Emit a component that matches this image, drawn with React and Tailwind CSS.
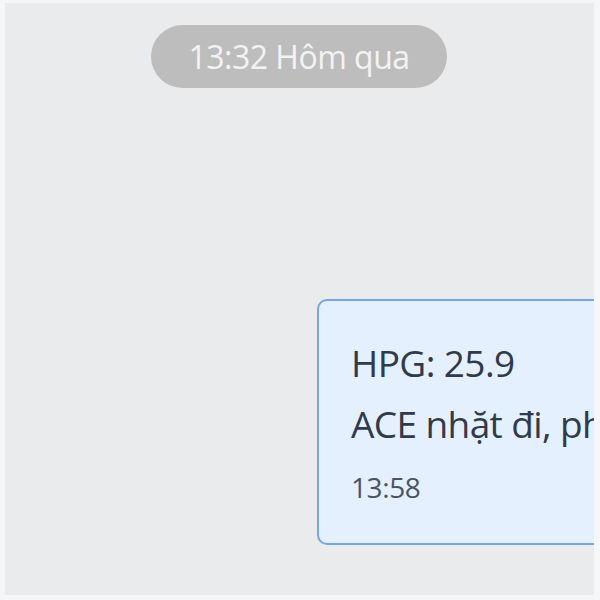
import React from "react";

const App = () => {
  return (
    <div className="w-[600px] h-[600px] overflow-hidden bg-[#f5f6f8] pt-[3px] pl-[5px] pr-[6px] pb-[5px]">
      <div
        className="h-full bg-[#eaebed] overflow-hidden flex flex-col"
        style={{ fontFamily: '"Open Sans", "Noto Sans", sans-serif' }}
      >
        {/* Date divider */}
        <div className="flex justify-center pt-[22px] pr-[1px]">
          <div className="h-[63px] px-[37px] rounded-full bg-[#bdbdbd] flex items-center">
            <span className="text-[32px] font-medium text-[#f3f3f3] tracking-[-0.5px]">13:32 Hôm qua</span>
          </div>
        </div>

        {/* Message bubble */}
        <div className="flex justify-start pl-[312px] mt-[211px]">
          <div className="w-[400px] shrink-0 h-[246px] rounded-[10px] border-2 border-[#76a5ea] bg-[#e5f0fe] pl-[32px] pt-[40px]">
            <p className="text-[37px] leading-[44px] text-[#2f3a4a] whitespace-nowrap tracking-[-0.6px]">HPG: 25.9</p>
            <p className="text-[37px] leading-[44px] mt-[17px] text-[#2f3a4a] whitespace-nowrap tracking-[-0.6px]">ACE nhặt đi, phải</p>
            <p className="text-[28px] leading-[30px] mt-[26px] text-[#4a5464] tracking-[-0.4px]">13:58</p>
          </div>
        </div>
      </div>
    </div>
  );
};

export default App;
